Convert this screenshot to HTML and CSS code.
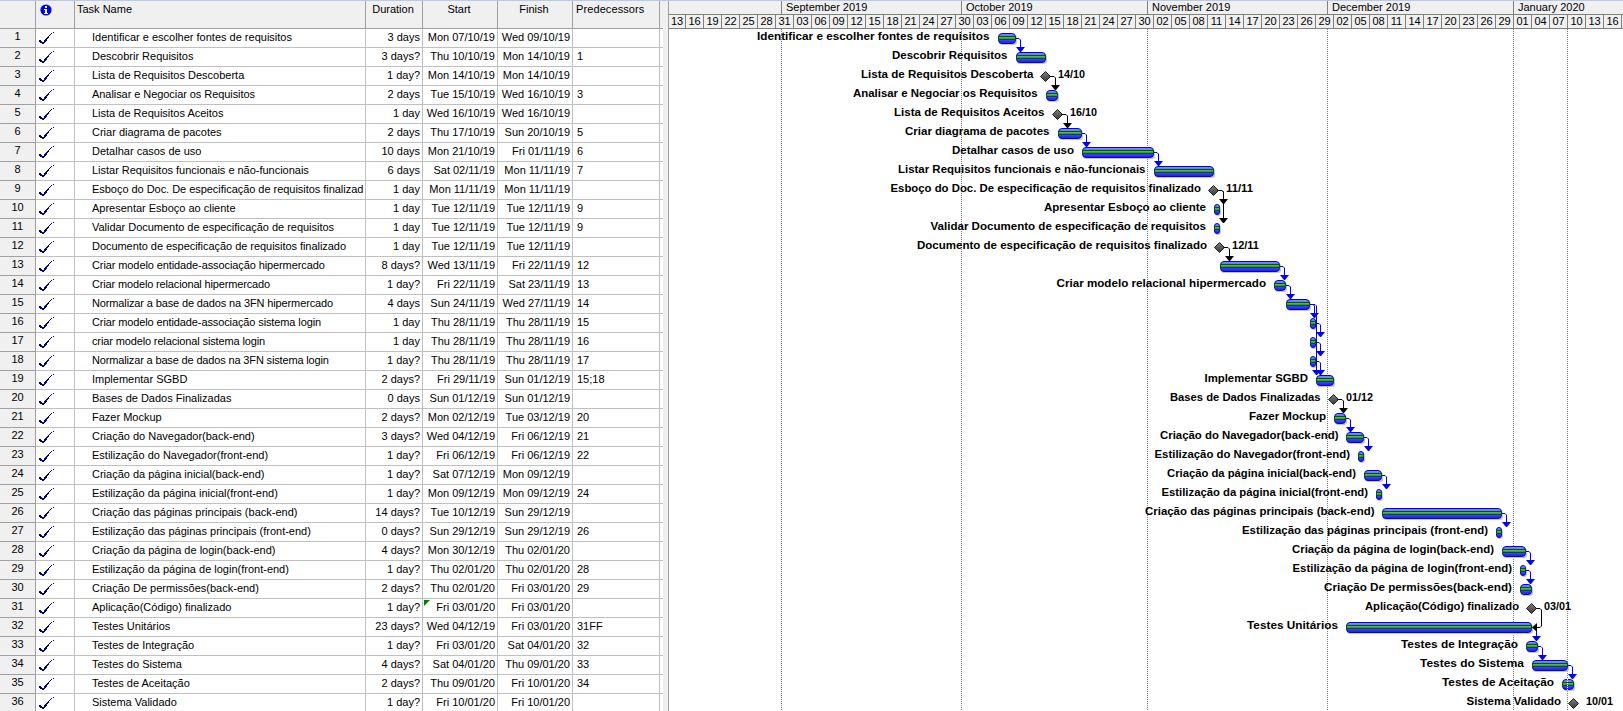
FILE: index.html
```html
<!DOCTYPE html>
<html lang="pt">
<head>
<meta charset="utf-8">
<title>Gantt</title>
<link rel="stylesheet" href="styles.css">
</head>
<body>
<div class="app">
  <section class="sheet">
    <div class="row head">
      <div class="cell id"></div>
      <div class="cell info"><svg width="12" height="12" viewBox="0 0 12 12"><circle cx="6" cy="6" r="5.6" fill="#0000f0"/><path d="M5 2h2v2H5zM4 5h3v4h1v1H4V9h1V6H4z" fill="#fff"/></svg></div>
      <div class="cell name">Task Name</div>
      <div class="cell dur">Duration</div>
      <div class="cell date">Start</div>
      <div class="cell date">Finish</div>
      <div class="cell pred">Predecessors</div>
      <div class="tail"></div>
    </div>
    <div id="rows"></div>
  </section>
  <div class="splitter"></div>
  <section class="chart">
    <div class="tier months" id="months"></div>
    <div class="tier days" id="days"></div>
    <div class="canvas" id="canvas"></div>
  </section>
</div>
<script src="gantt.js"></script>
</body>
</html>
```
FILE: styles.css
```css
* { box-sizing: border-box; }
body { margin: 0; background: #fff; color: #000; font: 11px/13px "Liberation Sans", Arial, sans-serif; overflow: hidden; }
.app { display: flex; width: 1623px; height: 711px; border-top: 1px solid #b4cbea; overflow: hidden; }
.sheet { width: 663px; flex: none; }
.row { display: flex; height: 19px; }
.cell { border-right: 1px solid #c0c0c0; border-bottom: 1px solid #c0c0c0; white-space: nowrap; overflow: hidden; flex: none; padding-top: 2px; }
.id { width: 36px; background: #f0f0f0; text-align: center; border-color: #a0a0a0; padding-top: 1px; }
.info { width: 39px; padding: 3px 0 0 3px; }
.name { width: 291px; padding-left: 17px; }
.dur { width: 57px; padding-right: 2px; text-align: right; }
.date { width: 75px; padding-right: 2px; text-align: right; position: relative; }
.pred { width: 87px; padding-left: 4px; }
.tail { width: 3px; border-bottom: 1px solid #c0c0c0; }
.head { height: 28px; }
.head .cell { background: #f0f0f0; border-color: #a0a0a0; padding-top: 2px; text-align: center; }
.head .info { padding: 3px 0 0 4px; text-align: left; }
.head .name { text-align: left; padding-left: 2px; }
.head .pred { text-align: left; padding-left: 3px; letter-spacing: .1px; }
.head .tail { background: #f0f0f0; border-color: #a0a0a0; }
.info svg { display: block; }
.flag { position: absolute; left: 1px; top: 1px; width: 6px; height: 6px; background: #008000; clip-path: polygon(0 0, 100% 0, 0 100%); }
.splitter { width: 6px; flex: none; background: #f0f0f0; border-right: 1px solid #a0a0a0; }
.chart { flex: 1; min-width: 0; overflow: hidden; }
.tier { display: flex; height: 14px; background: #f0f0f0; border-bottom: 1px solid #808080; overflow: hidden; white-space: nowrap; }
.tier div { flex: none; border-right: 1px solid #808080; }
.months div { padding-left: 4px; }
.days div { width: 18px; text-align: center; }
.days div:first-child { width: 17px; }
.canvas svg { display: block; }
.label { font-weight: bold; font-size: 11px; }
```
FILE: gantt.js
```js
const X0 = 669, Y0 = 29, ROW = 19;
// name, duration, start, finish, predecessors, bar [x0, x1] or milestone [x], label [left, right], milestone date
const tasks = [
 ["Identificar e escolher fontes de requisitos","3 days","Mon 07/10/19","Wed 09/10/19","",[998,1016],[757,989.5]],
 ["Descobrir Requisitos","3 days?","Thu 10/10/19","Mon 14/10/19","1",[1016,1046],[892,1007.5]],
 ["Lista de Requisitos Descoberta","1 day?","Mon 14/10/19","Mon 14/10/19","",[1045.5],[861,1033.5],"14/10"],
 ["Analisar e Negociar os Requisitos","2 days","Tue 15/10/19","Wed 16/10/19","3",[1046,1058],[853,1037.5]],
 ["Lista de Requisitos Aceitos","1 day","Wed 16/10/19","Wed 16/10/19","",[1057.5],[894,1044.5],"16/10"],
 ["Criar diagrama de pacotes","2 days","Thu 17/10/19","Sun 20/10/19","5",[1058,1082],[905,1049.5]],
 ["Detalhar casos de uso","10 days","Mon 21/10/19","Fri 01/11/19","6",[1082,1154],[952,1074]],
 ["Listar Requisitos funcionais e não-funcionais","6 days","Sat 02/11/19","Mon 11/11/19","7",[1154,1214],[898,1145.5]],
 ["Esboço do Doc. De especificação de requisitos finalizado","1 day","Mon 11/11/19","Mon 11/11/19","",[1213.5],[890.5,1201],"11/11"],
 ["Apresentar Esboço ao cliente","1 day","Tue 12/11/19","Tue 12/11/19","9",[1214,1220],[1044,1206]],
 ["Validar Documento de especificação de requisitos","1 day","Tue 12/11/19","Tue 12/11/19","9",[1214,1220],[930.5,1206]],
 ["Documento de especificação de requisitos finalizado","1 day","Tue 12/11/19","Tue 12/11/19","",[1219.5],[917,1207],"12/11"],
 ["Criar modelo entidade-associação hipermercado","8 days?","Wed 13/11/19","Fri 22/11/19","12",[1220,1280]],
 ["Criar modelo relacional hipermercado","1 day?","Fri 22/11/19","Sat 23/11/19","13",[1274,1286],[1056.5,1266]],
 ["Normalizar a base de dados na 3FN hipermercado","4 days","Sun 24/11/19","Wed 27/11/19","14",[1286,1310]],
 ["Criar modelo entidade-associação sistema login","1 day","Thu 28/11/19","Thu 28/11/19","15",[1310,1316]],
 ["criar modelo relacional sistema login","1 day","Thu 28/11/19","Thu 28/11/19","16",[1310,1316]],
 ["Normalizar a base de dados na 3FN sistema login","1 day?","Thu 28/11/19","Thu 28/11/19","17",[1310,1316]],
 ["Implementar SGBD","2 days?","Fri 29/11/19","Sun 01/12/19","15;18",[1316,1334],[1204.5,1308]],
 ["Bases de Dados Finalizadas","0 days","Sun 01/12/19","Sun 01/12/19","",[1333.5],[1170,1320.5],"01/12"],
 ["Fazer Mockup","2 days?","Mon 02/12/19","Tue 03/12/19","20",[1334,1346],[1249,1326]],
 ["Criação do Navegador(back-end)","3 days?","Wed 04/12/19","Fri 06/12/19","21",[1346,1364],[1160,1338.5]],
 ["Estilização do Navegador(front-end)","1 day?","Fri 06/12/19","Fri 06/12/19","22",[1358,1364],[1154.5,1350]],
 ["Criação da página inicial(back-end)","1 day?","Sat 07/12/19","Mon 09/12/19","",[1364,1382],[1167,1356]],
 ["Estilização da página inicial(front-end)","1 day?","Mon 09/12/19","Mon 09/12/19","24",[1376,1382],[1161.5,1368]],
 ["Criação das páginas principais (back-end)","14 days?","Tue 10/12/19","Sun 29/12/19","",[1382,1502],[1145,1374.5]],
 ["Estilização das páginas principais (front-end)","0 days?","Sun 29/12/19","Sun 29/12/19","26",[1496,1502],[1242,1488]],
 ["Criação da página de login(back-end)","4 days?","Mon 30/12/19","Thu 02/01/20","",[1502,1526],[1292,1494]],
 ["Estilização da página de login(front-end)","1 day?","Thu 02/01/20","Thu 02/01/20","28",[1520,1526],[1292.5,1512]],
 ["Criação De permissões(back-end)","2 days?","Thu 02/01/20","Fri 03/01/20","29",[1520,1532],[1324,1512]],
 ["Aplicação(Código) finalizado","1 day?","Fri 03/01/20","Fri 03/01/20","",[1531.5],[1365,1519],"03/01"],
 ["Testes Unitários","23 days?","Wed 04/12/19","Fri 03/01/20","31FF",[1346,1532],[1247,1338]],
 ["Testes de Integração","1 day?","Fri 03/01/20","Sat 04/01/20","32",[1526,1538],[1401,1518]],
 ["Testes do Sistema","4 days?","Sat 04/01/20","Thu 09/01/20","33",[1532,1568],[1420,1524]],
 ["Testes de Aceitação","2 days?","Thu 09/01/20","Fri 10/01/20","34",[1562,1574],[1442,1554]],
 ["Sistema Validado","1 day?","Fri 10/01/20","Fri 10/01/20","",[1573.5],[1466.5,1561],"10/01"]
];
// check mark as runs of pixels: x, y, width
const runs = [[14,0,1],[12,1,1],[11,2,1],[10,3,1],[9,4,1],[8,5,2],[7,6,2],[6,7,2],[0,8,2],[5,8,3],[0,9,3],[5,9,2],[1,10,5],[3,11,2]];
const check = `<svg width="18" height="14" viewBox="0 0 18 14"><path fill="#000080" shape-rendering="crispEdges" d="${runs.map(r => `M${r[0]} ${r[1]}h${r[2]}v1h-${r[2]}z`).join("")}"/></svg>`;
// right edge of the task name, for the rows set tighter than the font's own spacing
const nameRight = { 4: 255, 8: 308.8, 9: 363.3, 10: 235.5, 11: 334, 12: 346, 13: 324.7, 14: 270, 15: 333, 16: 321, 17: 265, 18: 328.8 };
document.getElementById("rows").innerHTML = tasks.map((t, i) =>
 `<div class="row"><div class="cell id">${i + 1}</div><div class="cell info">${check}</div><div class="cell name"><span>${i === 8 ? t[0].slice(0, -1) : t[0]}</span></div><div class="cell dur">${t[1]}</div><div class="cell date">${i === 30 ? '<i class="flag"></i>' : ""}${t[2]}</div><div class="cell date">${t[3]}</div><div class="cell pred">${t[4]}</div><div class="tail"></div></div>`).join("");
document.querySelectorAll(".name span").forEach((el, i) => {
 const right = nameRight[i + 1];
 if (!right) return;
 const box = el.getBoundingClientRect();
 el.style.letterSpacing = (right - box.right) / el.textContent.length + "px";
});

document.getElementById("months").innerHTML = [["",113],["September 2019",180],["October 2019",186],["November 2019",180],["December 2019",186],["January 2020",120]]
 .map(m => `<div style="width:${m[1]}px">${m[0]}</div>`).join("");
const days = [];
for (let d = new Date(2019, 7, 13, 12); d < new Date(2020, 0, 18); d.setDate(d.getDate() + 3)) days.push(String(d.getDate()).padStart(2, "0"));
document.getElementById("days").innerHTML = days.map(d => `<div>${d}</div>`).join("");

const top0 = i => Y0 + ROW * (i - 1);
let grid = "", s = "";
for (const x of [781, 961, 1147, 1327, 1513, 1567])
 grid += `<path d="M${x + .5} 29V711" stroke="#808080" stroke-dasharray="1 1" fill="none"/>`;
const arrow = (x, y, c) => `<path d="M${x - 4.5} ${y - 5}h9l-4 5h-1z" fill="${c}"/>`;
function link(from, to, dx) {
 const b = tasks[from - 1][5], ms = b.length === 1, c = ms ? "#000" : "#0000ff";
 const sx = ms ? b[0] + 4 : b[1], x = ms ? b[0] + 10 : b[1] + (dx || 4.5);
 const y = top0(from) + 9.5, ty = top0(to) + 4;
 return `<path d="M${sx} ${y}H${x - 1.5}L${x} ${y + 1.5}V${ty - 3}" fill="none" stroke="${c}"/>` + arrow(x, ty, c);
}
tasks.forEach((t, i) => {
 const y = top0(i + 1), b = t[5];
 if (b.length === 2) {
  const w = b[1] - b[0], x = b[0];
  s += `<rect x="${x + 1}" y="${y + 6}" width="${w}" height="10" rx="3" fill="#c4c4c4"/>
  <rect x="${x + .5}" y="${y + 4.5}" width="${w - 1}" height="10" rx="${w < 8 ? 2.5 : 3.5}" fill="url(#blue)" stroke="#0000f0"/>
  <rect x="${x}" y="${y + 7}" width="${w}" height="4" fill="#005a00"/><rect x="${x + 1}" y="${y + 8}" width="${w - 2}" height="2" fill="url(#green)"/>`;
 } else {
  const c = b[0], m = y + 9.5;
  s += `<path d="M${c} ${m - 5}l5 5l-5 5l-5 -5z" fill="url(#ms)" stroke="#202020"/><text class="label" x="${c + 12.5}" y="${y + 11}" textLength="27" lengthAdjust="spacingAndGlyphs">${t[7]}</text>`;
 }
 if (t[6]) s += `<text class="label" x="${t[6][0]}" y="${y + 11}" textLength="${t[6][1] - t[6][0]}" lengthAdjust="spacingAndGlyphs">${t[0]}</text>`;
});
[[1,2],[3,4],[5,6],[6,7],[7,8],[9,10],[9,11],[12,13],[13,14],[14,15],[15,16],[15,19,6.5],[16,17],[17,18],[18,19],[20,21],[21,22],[22,23],[24,25],[26,27],[28,29],[29,30],[32,33],[33,34],[34,35]]
 .forEach(l => { s += link(...l); });
const fy = top0(31) + 9.5;
s += `<path d="M1536 ${fy}H1540L1541.5 ${fy + 1.5}V${fy + 17.5}L1540 ${fy + 19}H1536" fill="none" stroke="#000"/><path d="M1532 ${fy + 19}l5 -4.5v9z" fill="#000"/>`;
s += `<path d="M1567.5 ${top0(35) + 4}V${top0(35) + 15}" stroke="#fff" stroke-dasharray="1 1"/>`;
document.getElementById("canvas").innerHTML = `<svg width="954" height="682" viewBox="${X0} 29 954 682"><defs>
<linearGradient id="blue" x2="0" y2="1"><stop offset="0" stop-color="#9090ff"/><stop offset=".35" stop-color="#6060ff"/><stop offset=".6" stop-color="#4848ff"/><stop offset="1" stop-color="#1818f0"/></linearGradient>
<linearGradient id="green" x2="0" y2="1"><stop offset="0" stop-color="#58c858"/><stop offset="1" stop-color="#2c8c2c"/></linearGradient>
<linearGradient id="ms" x2="0" y2="1"><stop offset="0" stop-color="#808080"/><stop offset="1" stop-color="#383838"/></linearGradient></defs>${grid}${s}</svg>`;
```
